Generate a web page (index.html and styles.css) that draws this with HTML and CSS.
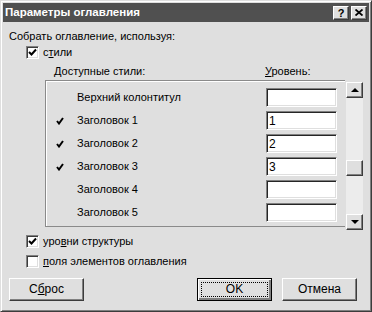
FILE: index.html
```html
<!DOCTYPE html>
<html lang="ru">
<head>
<meta charset="utf-8">
<title>Параметры оглавления</title>
<link rel="stylesheet" href="styles.css">
</head>
<body>
<div class="window">
  <div class="titlebar">
    <span class="title">Параметры оглавления</span>
    <div class="caption-btns">
      <span class="cbtn help">?</span>
      <span class="cbtn close"><svg width="8" height="7" viewBox="0 0 8 7"><path d="M0.5 0.5L7.5 6.5M7.5 0.5L0.5 6.5" stroke="#000" stroke-width="1.8" fill="none"/></svg></span>
    </div>
  </div>
  <div class="content">
    <div class="caption">Собрать оглавление, используя:</div>
    <div class="check check-styles">
      <span class="box"><svg width="9" height="9" viewBox="0 0 9 9"><path d="M1 4L3.5 6.5L8 1.5" stroke="#000" stroke-width="2" fill="none"/></svg></span>
      <span class="check-label">с<u>т</u>или</span>
    </div>
    <div class="list-head">
      <span class="head-name">Доступные стили:</span>
      <span class="head-level"><u>У</u>ровень:</span>
    </div>
    <div class="list-area">
      <div class="list">
        <div class="row"><span class="mark"></span><span class="name">Верхний колонтитул</span><span class="level"></span></div>
        <div class="row"><span class="mark"><svg width="8" height="8" viewBox="0 0 8 8"><path d="M1 4L3 6.5L7 1" stroke="#000" stroke-width="2" fill="none"/></svg></span><span class="name">Заголовок 1</span><span class="level">1</span></div>
        <div class="row"><span class="mark"><svg width="8" height="8" viewBox="0 0 8 8"><path d="M1 4L3 6.5L7 1" stroke="#000" stroke-width="2" fill="none"/></svg></span><span class="name">Заголовок 2</span><span class="level">2</span></div>
        <div class="row"><span class="mark"><svg width="8" height="8" viewBox="0 0 8 8"><path d="M1 4L3 6.5L7 1" stroke="#000" stroke-width="2" fill="none"/></svg></span><span class="name">Заголовок 3</span><span class="level">3</span></div>
        <div class="row"><span class="mark"></span><span class="name">Заголовок 4</span><span class="level"></span></div>
        <div class="row"><span class="mark"></span><span class="name">Заголовок 5</span><span class="level"></span></div>
      </div>
      <div class="scrollbar">
        <div class="sbtn"><span class="tri-up"></span></div>
        <div class="track">
          <div class="track-top"></div>
          <div class="thumb"></div>
        </div>
        <div class="sbtn"><span class="tri-down"></span></div>
      </div>
    </div>
    <div class="check check-levels">
      <span class="box"><svg width="9" height="9" viewBox="0 0 9 9"><path d="M1 4L3.5 6.5L8 1.5" stroke="#000" stroke-width="2" fill="none"/></svg></span>
      <span class="check-label">уро<u>в</u>ни структуры</span>
    </div>
    <div class="check check-fields">
      <span class="box"></span>
      <span class="check-label"><u>п</u>оля элементов оглавления</span>
    </div>
    <div class="buttons">
      <span class="btn">С<u>б</u>рос</span>
      <span class="spacer"></span>
      <span class="btn default"><span class="focus">OK</span></span>
      <span class="btn">Отмена</span>
    </div>
  </div>
</div>
</body>
</html>
```

FILE: styles.css
```css
html, body {
  margin: 0;
  padding: 0;
  background: #dfdfdf;
}

body {
  font-family: "Liberation Sans", Arial, sans-serif;
  font-size: 11px;
  line-height: 13px;
  color: #000;
}

u {
  text-decoration: underline;
  text-underline-offset: 1px;
}

.window {
  width: 372px;
  height: 312px;
  box-sizing: border-box;
  background: #dfdfdf;
  border: 1px solid;
  border-color: #dfdfdf #3c3c3c #3c3c3c #dfdfdf;
  box-shadow: inset 1px 1px #ffffff, inset -1px -1px #808080;
  padding: 2px;
  display: flex;
  flex-direction: column;
}

.titlebar {
  height: 19px;
  background: #505050;
  display: flex;
  align-items: center;
  justify-content: space-between;
  padding: 0 2px;
}

.title {
  color: #fff;
  font-weight: bold;
  font-size: 11.5px;
}

.caption-btns {
  display: flex;
  gap: 2px;
}

.cbtn {
  width: 16px;
  height: 14px;
  box-sizing: border-box;
  background: #dfdfdf;
  border: 1px solid;
  border-color: #fff #3c3c3c #3c3c3c #fff;
  box-shadow: inset -1px -1px #808080;
  display: flex;
  align-items: center;
  justify-content: center;
  font-weight: bold;
  font-size: 11px;
  line-height: 12px;
}

.content {
  flex: 1;
  padding: 8px 6px 0 6px;
  display: flex;
  flex-direction: column;
}

.caption {
  height: 13px;
}

.check {
  display: flex;
  align-items: center;
  height: 13px;
  padding-left: 17px;
}

.check-styles {
  margin-top: 3px;
}

.box {
  width: 13px;
  height: 13px;
  box-sizing: border-box;
  background: #fff;
  border: 1px solid;
  border-color: #808080 #fff #fff #808080;
  box-shadow: inset 1px 1px #3c3c3c, inset -1px -1px #dfdfdf;
  display: flex;
  align-items: center;
  justify-content: center;
  margin-right: 4px;
}

.list-head {
  display: flex;
  height: 13px;
  margin-top: 6px;
  padding-left: 45px;
}

.head-name {
  width: 211px;
}

.list-area {
  display: flex;
  align-items: flex-start;
  margin-top: 2px;
  padding-left: 36px;
}

.list {
  width: 302px;
  height: 147px;
  box-sizing: border-box;
  border: 1px solid #8a8a8a;
  border-right: none;
  box-shadow: inset 1px 1px #fff;
  padding: 7px 8px 0 10px;
  display: flex;
  flex-direction: column;
  gap: 4px;
  overflow: hidden;
}

.row {
  display: flex;
  align-items: center;
  height: 19px;
  flex: none;
}

.mark {
  width: 21px;
  display: flex;
  align-items: center;
}

.name {
  flex: 1;
}

.level {
  width: 71px;
  height: 19px;
  box-sizing: border-box;
  background: #fff;
  border: 1px solid;
  border-color: #808080 #fff #fff #808080;
  box-shadow: inset 1px 1px #262626, inset -1px -1px #dfdfdf;
  padding: 2px 0 0 2px;
  font-size: 12px;
  line-height: 15px;
}

.scrollbar {
  width: 17px;
  height: 148px;
  margin-top: 2px;
  margin-left: 1px;
  display: flex;
  flex-direction: column;
  background: #ececec;
}

.sbtn {
  height: 16px;
  flex: none;
  box-sizing: border-box;
  background: #dfdfdf;
  border: 1px solid;
  border-color: #fff #3c3c3c #3c3c3c #fff;
  box-shadow: inset -1px -1px #808080;
  display: flex;
  align-items: center;
  justify-content: center;
}

.tri-up {
  width: 0;
  height: 0;
  border-left: 4px solid transparent;
  border-right: 4px solid transparent;
  border-bottom: 4px solid #000;
}

.tri-down {
  width: 0;
  height: 0;
  border-left: 4px solid transparent;
  border-right: 4px solid transparent;
  border-top: 4px solid #000;
}

.track {
  flex: 1;
  display: flex;
  flex-direction: column;
}

.track-top {
  height: 62px;
}

.thumb {
  height: 16px;
  box-sizing: border-box;
  background: #dfdfdf;
  border: 1px solid;
  border-color: #fff #3c3c3c #3c3c3c #fff;
  box-shadow: inset -1px -1px #808080;
}

.check-levels {
  margin-top: 5px;
}

.check-fields {
  margin-top: 7px;
}

.buttons {
  display: flex;
  margin-top: 10px;
  padding-right: 6px;
  gap: 10px;
}

.spacer {
  flex: 1;
}

.btn {
  width: 75px;
  height: 23px;
  box-sizing: border-box;
  background: #dfdfdf;
  border: 1px solid;
  border-color: #fff #3c3c3c #3c3c3c #fff;
  box-shadow: inset -1px -1px #808080;
  display: flex;
  align-items: center;
  justify-content: center;
  font-size: 12px;
}

.btn.default {
  border: 1px solid #000;
  box-shadow: inset 1px 1px #fff, inset -2px -2px #808080, inset -1px -1px #3c3c3c;
  padding: 3px;
}

.focus {
  flex: 1;
  align-self: stretch;
  border: 1px dotted #000;
  display: flex;
  align-items: center;
  justify-content: center;
}
```
